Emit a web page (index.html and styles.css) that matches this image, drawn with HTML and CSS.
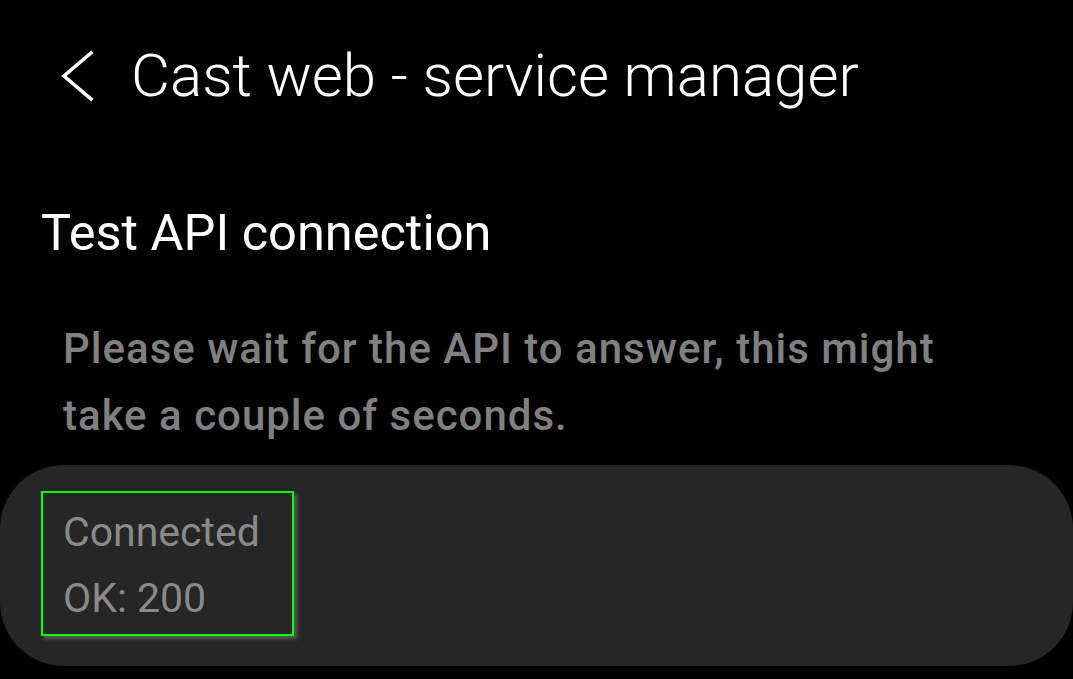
FILE: index.html
```html
<!DOCTYPE html>
<html>
<head>
<meta charset="utf-8">
<link rel="stylesheet" href="styles.css">
</head>
<body>
<div class="screen">
  <header class="appbar">
    <svg class="back" width="34" height="52" viewBox="0 0 34 52"><path d="M30 3 L3 26 L30 49" fill="none" stroke="#fff" stroke-width="3.6" stroke-linecap="square" stroke-linejoin="miter"/></svg>
    <h1 class="title">Cast web - service manager</h1>
  </header>
  <h2 class="section">Test API connection</h2>
  <p class="desc">Please wait for the API to answer, this might take a couple of seconds.</p>
  <div class="card">
    <div class="result">
      <div class="line">Connected</div>
      <div class="line">OK: 200</div>
    </div>
  </div>
</div>
</body>
</html>
```
FILE: styles.css
```css
html, body {
  margin: 0;
  padding: 0;
  background: #000;
}
.screen {
  width: 1073px;
  height: 679px;
  overflow: hidden;
  font-family: Roboto, "Noto Sans", sans-serif;
  color: #fff;
}
.appbar {
  display: flex;
  align-items: center;
  height: 76px;
  padding-top: 38px;
  padding-left: 61px;
}
.back {
  display: block;
  margin-right: 36px;
}
.title {
  margin: 0;
  font-size: 60px;
  font-weight: 300;
  line-height: 76px;
}
.section {
  margin: 0;
  margin-top: 89px;
  padding-left: 41px;
  font-size: 50.5px;
  font-weight: 400;
  line-height: 60px;
}
.desc {
  margin: 0;
  margin-top: 52px;
  padding-left: 63px;
  width: 920px;
  font-size: 42px;
  font-weight: 500;
  letter-spacing: 1px;
  line-height: 67px;
  color: #808080;
}
.card {
  margin-top: 16px;
  height: 201px;
  background: #262626;
  border-radius: 64px;
  padding-top: 26px;
  padding-left: 41px;
  box-sizing: border-box;
}
.result {
  width: 253px;
  height: 145px;
  box-sizing: border-box;
  border: 2px solid #00ff00;
  box-shadow: 3px 3px 4px rgba(100, 100, 100, 0.9);
  padding: 6px 0 0 20px;
}
.line {
  font-size: 41px;
  line-height: 66px;
  color: #8a8a8a;
}
```
